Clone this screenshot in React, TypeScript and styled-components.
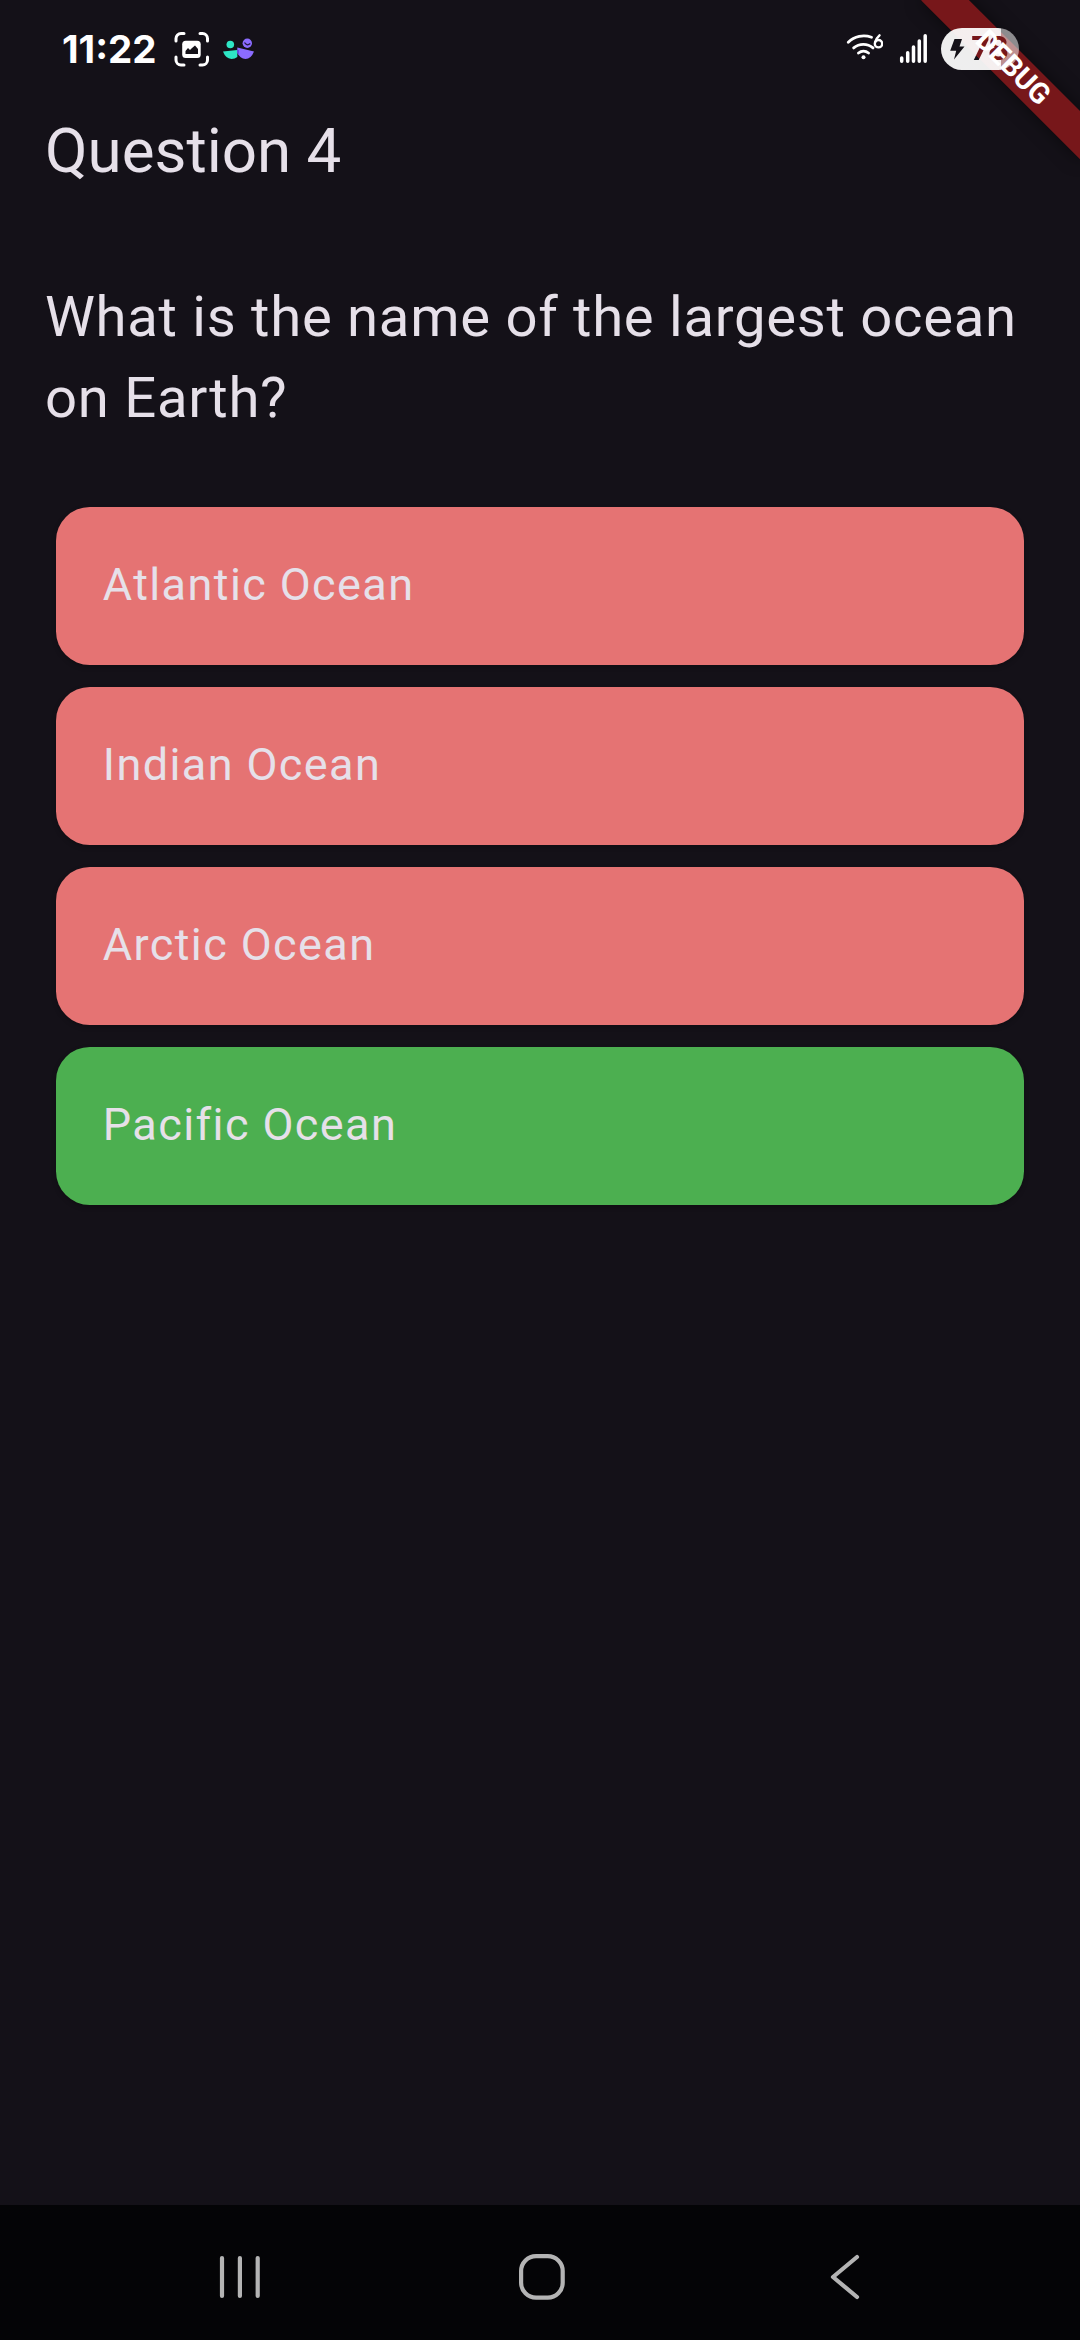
import React from 'react';
import styled, { createGlobalStyle } from 'styled-components';

const GlobalStyle = createGlobalStyle`
  * { box-sizing: border-box; }
  body { margin: 0; background: #141118; }
`;

const Screen = styled.div`
  position: relative;
  display: flex;
  flex-direction: column;
  width: 1080px;
  height: 2340px;
  overflow: hidden;
  background: #141118;
  color: #e6e0e9;
  font-family: Roboto, 'Noto Sans', sans-serif;
`;

const StatusBar = styled.header`
  display: flex;
  align-items: center;
  height: 98px;
  padding: 0 61px 0 62px;
`;

const Clock = styled.time`
  position: relative;
  z-index: 1;
  width: 112px;
  font: 700 38.5px/1 Inter, Roboto, sans-serif;
  color: #fff;
`;

const StatusIcon = styled.svg<{ $gap?: number }>`
  display: block;
  flex: none;
  position: relative;
  z-index: 1;
  margin-left: ${(p) => p.$gap ?? 0}px;
`;

const Spacer = styled.div`
  flex: 1;
`;

const Battery = styled.div`
  position: relative;
  z-index: 1;
  display: flex;
  align-items: center;
  width: 78px;
  height: 42px;
  margin-left: 14px;
  padding-left: 9px;
  border-radius: 21px;
  background: linear-gradient(90deg, rgba(255, 255, 255, 0.93) 60px, rgba(255, 255, 255, 0.52) 60px);
`;

const Level = styled.span`
  margin-left: 6px;
  font: 700 32px/42px Inter, Roboto, sans-serif;
  letter-spacing: -1.2px;
  color: transparent;
  background: linear-gradient(45deg, #141118 14px, #77171a 14px);
  background-clip: text;
`;

const Corner = styled.div<{ $front?: boolean }>`
  position: absolute;
  top: 0;
  right: 0;
  z-index: ${(p) => (p.$front ? 2 : 0)};
  width: 240px;
  height: 240px;
  overflow: hidden;
`;

const Ribbon = styled.div<{ $front?: boolean }>`
  position: absolute;
  top: 78.75px;
  left: 127.5px;
  width: 225px;
  height: 33.75px;
  transform: rotate(45deg);
  transform-origin: 112.5px -78.75px;
  background: ${(p) => (p.$front ? 'transparent' : '#77171a')};
  box-shadow: ${(p) => (p.$front ? 'none' : '0 0 17px rgba(0, 0, 0, 0.5)')};
  color: #fff;
  text-align: center;
  font-size: 28.7px;
  line-height: 33.75px;
  font-weight: 700;
`;

const Title = styled.h1`
  height: 105px;
  margin: 0;
  padding: 14px 45px 0;
  font-size: 61.875px;
  line-height: 78.75px;
  font-weight: 400;
`;

const Question = styled.p`
  margin: 0;
  padding: 74px 45px 0;
  font-size: 56.25px;
  line-height: 81px;
  letter-spacing: 0.703px;
`;

const Answers = styled.div`
  display: grid;
  gap: 22.5px;
  padding: 68px 56.25px 0;
`;

const Answer = styled.button<{ $correct?: boolean }>`
  height: 157.5px;
  padding: 0 0 3px 46.5px;
  border: 0;
  border-radius: 33.75px;
  background: ${(p) => (p.$correct ? '#4caf50' : '#e57373')};
  box-shadow: 0 2px 5px rgba(0, 0, 0, 0.25);
  color: #e6e0e9;
  font: 400 45px/67.5px Roboto, sans-serif;
  letter-spacing: 1.406px;
  text-align: left;
`;

const NavBar = styled.nav`
  display: grid;
  grid-template-columns: repeat(3, 303px);
  justify-content: center;
  justify-items: center;
  align-items: center;
  height: 135px;
  padding: 9px 0 0 4px;
  background: #040406;
`;

const NavIcon = styled.svg`
  display: block;
  width: 56px;
  height: 56px;
  fill: none;
  stroke: #b4b4b4;
  stroke-width: 4.2;
  stroke-linecap: round;
  stroke-linejoin: round;
`;

const answers = [
  { text: 'Atlantic Ocean', correct: false },
  { text: 'Indian Ocean', correct: false },
  { text: 'Arctic Ocean', correct: false },
  { text: 'Pacific Ocean', correct: true },
];

export default function App() {
  return (
    <Screen>
      <GlobalStyle />
      <Corner><Ribbon /></Corner>
      <StatusBar>
        <Clock>11:22</Clock>
        <StatusIcon width="36" height="36" viewBox="0 0 36 36" fill="none">
          <path d="M2 10V7.500a5 5 0 0 1 5-5h3M26 2.500h2.500a5 5 0 0 1 5 5V10M33.500 26v3a5 5 0 0 1-5 5H26M10 34H7a5 5 0 0 1-5-5v-3" stroke="#fff" strokeWidth="3" strokeLinecap="round" />
          <rect x="8.200" y="9.700" width="18.500" height="17.300" rx="3.500" fill="#fff" />
          <path d="M11.500 23v-3l2.500-3 2 2 2-2 3-2.500 3 3.500V23z" fill="#141118" />
        </StatusIcon>
        <StatusIcon $gap={13} width="32" height="22" viewBox="0 0 32 22">
          <circle cx="7.300" cy="6.500" r="3.800" fill="#2ee6c5" />
          <path d="M0 13.500L14.300 12V19Q12 21 8.500 21 2.500 20.500 0 13.500z" fill="#2ee6c5" />
          <circle cx="24.300" cy="5.200" r="4.700" fill="#8b6cff" />
          <path d="M21.500 4.500q2.500 4 5.800 1" fill="none" stroke="#241a45" strokeWidth="1.300" />
          <path d="M14.300 9.500L31 13.500Q28 21 22.500 21 17 20.500 14.300 15z" fill="#8b6cff" />
          <path d="M14.300 12h1.600v4.800l-1.600-2z" fill="#5a48e0" />
        </StatusIcon>
        <Spacer />
        <StatusIcon width="38" height="30" viewBox="0 0 38 30" fill="none" stroke="#fff" strokeWidth="2.800" strokeLinecap="round">
          <path d="M3.300 8.200A22 22 0 0 1 26.500 3.200M8.700 13.900A15 15 0 0 1 28 13.900M13.500 19A8 8 0 0 1 23.500 19" />
          <circle cx="18.500" cy="23.300" r="2" fill="#fff" stroke="none" />
          <path d="M34.500 1.300Q31 4.500 30.200 8" strokeWidth="2.400" />
          <circle cx="33.500" cy="9.700" r="3.700" strokeWidth="2.400" />
        </StatusIcon>
        <StatusIcon $gap={16} width="28" height="30" viewBox="0 0 28 30" stroke="#fff" strokeWidth="3.500" strokeLinecap="round">
          <path d="M2.700 24v3.200M8.700 18.700v8.500M14.500 13v14.200M20.300 7v20.200M26.200 1.800v25.400" />
        </StatusIcon>
        <Battery>
          <svg width="15" height="22" viewBox="0 0 15 22"><path d="M4.500 1H12L9.500 8.500h5L4 21.500l2.200-8.800H.2z" fill="#141118" /></svg>
          <Level>78</Level>
        </Battery>
      </StatusBar>
      <Corner $front><Ribbon $front>DEBUG</Ribbon></Corner>
      <Title>Question 4</Title>
      <Question>What is the name of the largest ocean on Earth?</Question>
      <Answers>
        {answers.map((a) => (
          <Answer key={a.text} $correct={a.correct}>{a.text}</Answer>
        ))}
      </Answers>
      <Spacer />
      <NavBar>
        <NavIcon viewBox="0 0 56 56"><path d="M11 9v38M28.900 9v38M46.700 9v38" /></NavIcon>
        <NavIcon viewBox="0 0 56 56"><rect x="7.100" y="7.100" width="41.600" height="41.600" rx="15" /></NavIcon>
        <NavIcon viewBox="0 0 56 56"><path d="M40 8L16 28l24 20" /></NavIcon>
      </NavBar>
    </Screen>
  );
}
